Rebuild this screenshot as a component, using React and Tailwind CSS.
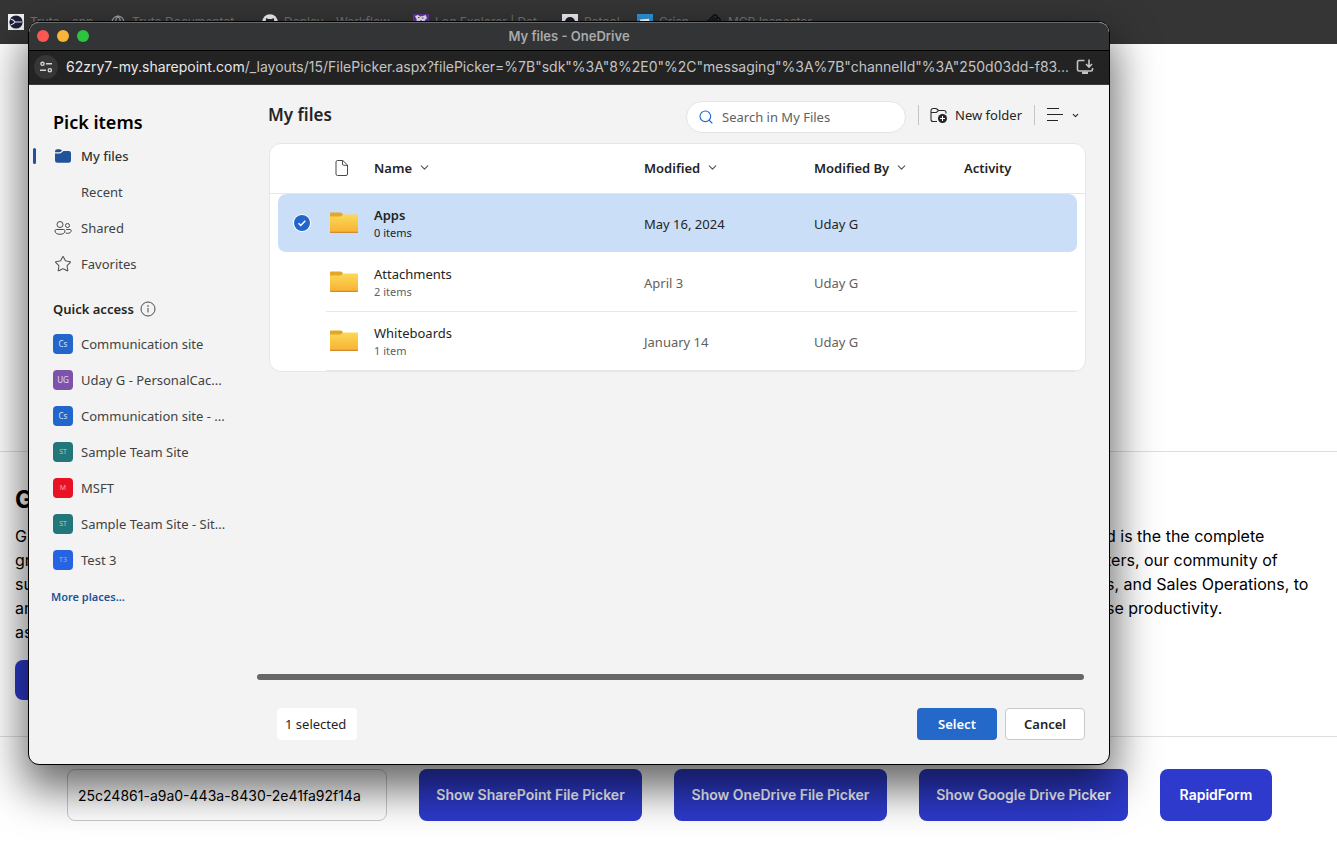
import React from 'react';
import { ChevronDown, Globe, Search, Star } from 'lucide-react';

const TrutoIcon = () => (
  <svg width="16" height="16" viewBox="0 0 16 16" className="shrink-0">
    <rect width="16" height="16" fill="#f4f4f8" />
    <circle cx="8" cy="8" r="6.6" fill="#1c2138" />
    <path d="M2.500 5C5 5.400 6.200 6.600 7.200 8c-1 1.400-2.200 2.600-4.700 3M7.200 8h6.600" fill="none" stroke="#f4f4f8" strokeWidth="1.100" />
  </svg>
);

const GithubIcon = () => (
  <svg width="16" height="16" viewBox="0 0 16 16" className="shrink-0">
    <circle cx="8" cy="8" r="7.800" fill="#f2f2f2" />
    <path d="M4.200 4l2 1h3.600l2-1 .4 2.600c.6 3.400-1.200 4.400-4.200 4.400s-4.800-1-4.200-4.400z" fill="#26282b" />
  </svg>
);

const DatadogIcon = () => (
  <svg width="16" height="16" viewBox="0 0 16 16" className="shrink-0">
    <rect width="16" height="16" fill="#5f3796" />
    <path d="M2 2l3-1 2 1.500 3-.5 2.500-1 1.500 3-2 2-1 4-4 2-3-3-.500-4z" fill="#efe8f7" />
    <path d="M5 3.500h1.500M9 4h1.500M8 6v2" stroke="#5f3796" strokeWidth="1.200" />
  </svg>
);

const RetoolIcon = () => (
  <svg width="16" height="16" viewBox="0 0 16 16" className="shrink-0">
    <rect width="16" height="16" fill="#f1eef3" />
    <path d="M3 8a5 5 0 0 1 10 0v5H3z" fill="#1d1d2b" />
  </svg>
);

const CrispIcon = () => (
  <svg width="16" height="16" viewBox="0 0 16 16" className="shrink-0">
    <rect width="16" height="16" fill="#2f94d8" />
    <path d="M3 5.500l9-.8.8 6-5 .4-2 2-.2-1.700-2 .2z" fill="#fff" />
  </svg>
);

const McpIcon = () => (
  <svg width="16" height="16" viewBox="0 0 16 16" className="shrink-0" fill="none" stroke="#0c0c0c" strokeWidth="1.300">
    <path d="M1.500 7.500l6-6a2 2 0 0 1 3 3l-4.500 4.500M6.500 8.500l4-4a2 2 0 0 1 3 3L8 13l1.500 1.500M9 3L4.500 7.500a2 2 0 0 0 3 3L12 6" />
  </svg>
);

const bookmarks = [
  { name: 'Truto - app', icon: <TrutoIcon />, width: 'w-[102px]' },
  { name: 'Truto Documentat..', icon: <Globe size={14} className="text-neutral-400 shrink-0 mx-px" />, width: 'w-[152px]' },
  { name: 'Deploy - Workflow', icon: <GithubIcon />, width: 'w-[151px]' },
  { name: 'Log Explorer | Dat..', icon: <DatadogIcon />, width: 'w-[149px]' },
  { name: 'Retool', icon: <RetoolIcon />, width: 'w-[75px]' },
  { name: 'Crisp', icon: <CrispIcon />, width: 'w-[69px]' },
  { name: 'MCP Inspector', icon: <McpIcon />, width: 'w-[120px]' },
];

const FolderSolid = () => (
  <svg width="20" height="20" viewBox="0 0 20 20" fill="#21539b">
    <path d="M2 5.500A2.300 2.300 0 0 1 4.300 3.200h2.400c.5 0 1 .2 1.400.5l1 .9-1.700 1.500c-.2.200-.4.200-.7.200H2z" />
    <path d="M2 7.500h4.800c.5 0 .9-.2 1.300-.5l2.300-2h5.300A2.300 2.300 0 0 1 18 7.300v7.200a2.300 2.300 0 0 1-2.300 2.300H4.300A2.300 2.300 0 0 1 2 14.500z" />
  </svg>
);

const People = () => (
  <svg width="20" height="20" viewBox="0 0 20 20" fill="none" stroke="#4a4a4a" strokeWidth="1">
    <circle cx="7" cy="6.500" r="3" />
    <circle cx="14.500" cy="7.500" r="2" />
    <path d="M3.300 11.500h7.400c.7 0 1.300.600 1.300 1.300 0 2.200-1.900 3.500-5 3.500s-5-1.300-5-3.500c0-.7.600-1.300 1.300-1.300z" />
    <path d="M13.200 11.500h3.900c.6 0 1.100.500 1.100 1.100 0 1.700-1.500 2.700-3.700 2.700-.7 0-1.300-.1-1.800-.3" />
  </svg>
);

const InfoIcon = () => (
  <svg width="16" height="16" viewBox="0 0 16 16" fill="none" stroke="#4a4a4a">
    <circle cx="8" cy="8" r="7" />
    <path d="M8 7v4.500" />
    <circle cx="8" cy="5" r=".4" />
  </svg>
);

const FileIcon = () => (
  <svg width="16" height="18" viewBox="0 0 16 18" fill="none" stroke="#4a4a4a" strokeWidth="1">
    <path d="M3.500 1.500h5.300L13.500 6v9A1.500 1.500 0 0 1 12 16.500H3.500A1.500 1.500 0 0 1 2 15V3a1.500 1.500 0 0 1 1.500-1.500z" />
    <path d="M8.500 1.500V5A1.300 1.300 0 0 0 9.800 6.300h3.700" />
  </svg>
);

const FolderIcon = () => (
  <svg width="28" height="22" viewBox="0 0 28 22" className="block">
    <defs>
      <linearGradient id="folder" x1="0" y1="0" x2="0" y2="1">
        <stop offset="0" stopColor="#fbd957" />
        <stop offset="1" stopColor="#f8b033" />
      </linearGradient>
    </defs>
    <path d="M0 1.500C0 1 .5.500 1 .500h9.500c.8 0 1.300.3 1.700.8L13 3v3H0z" fill="#e3a727" />
    <path d="M0 4.500h9.500c1 0 1.500-.2 2.200-.8l1.600-1.200H27c.6 0 1 .4 1 1V20c0 .6-.4 1-1 1H1c-.6 0-1-.4-1-1z" fill="url(#folder)" />
    <path d="M0 19.800V20c0 .6.400 1 1 1h26c.6 0 1-.4 1-1v-.2z" fill="#d08a30" />
  </svg>
);

const NewFolderIcon = () => (
  <svg width="20" height="20" viewBox="0 0 20 20" fill="none" stroke="#2b2b2b" strokeWidth="1.100">
    <path d="M8 16.500H4A2 2 0 0 1 2 14.500v-9a2 2 0 0 1 2-2h2.600c.5 0 .9.200 1.300.5L9.500 5.500H15a2 2 0 0 1 2 2v1" />
    <path d="M2 7.500h4.500c.5 0 .9-.1 1.200-.4L9.500 5.500" />
    <circle cx="13.500" cy="13.500" r="4.500" fill="#242424" stroke="none" />
    <path d="M13.500 11v5M11 13.500h5" stroke="#fff" />
  </svg>
);

const InstallIcon = () => (
  <svg width="18" height="16" viewBox="0 0 18 16" fill="none" stroke="#c4c4c4" strokeWidth="1.600">
    <path d="M8.500 1.500H3A1.500 1.500 0 0 0 1.500 3v7.500A1.500 1.500 0 0 0 3 12h12a1.500 1.500 0 0 0 1.500-1.500V9" />
    <path d="M13 .5v7M10 5l3 3 3-3" />
    <path d="M6 13.800h6" strokeWidth="2.400" />
  </svg>
);

const TuneIcon = () => (
  <svg width="14" height="14" viewBox="0 0 14 14" fill="none" stroke="#d5d5d5" strokeWidth="1.400">
    <circle cx="3.500" cy="3.800" r="1.600" />
    <path d="M7 3.800h6M1 10.200h6" />
    <circle cx="10.800" cy="10.200" r="1.600" />
  </svg>
);

const places = [
  { name: 'My files', icon: <FolderSolid />, active: true },
  { name: 'Recent', icon: null },
  { name: 'Shared', icon: <People /> },
  { name: 'Favorites', icon: <Star size={18} strokeWidth={1.4} className="text-neutral-600" /> },
];

const sites = [
  { name: 'Communication site', initials: 'Cs', color: 'bg-[#2266cb]', text: 'text-[8px] text-white/80' },
  { name: 'Uday G - PersonalCac...', initials: 'UG', color: 'bg-[#7d52ab]', text: 'text-[8px] text-white/80' },
  { name: 'Communication site - ...', initials: 'Cs', color: 'bg-[#2266cb]', text: 'text-[8px] text-white/80' },
  { name: 'Sample Team Site', initials: 'ST', color: 'bg-[#23767a]', text: 'text-[7px] text-white/60' },
  { name: 'MSFT', initials: 'M', color: 'bg-[#e81224]', text: 'text-[7px] text-white/60' },
  { name: 'Sample Team Site - Sit...', initials: 'ST', color: 'bg-[#23767a]', text: 'text-[7px] text-white/60' },
  { name: 'Test 3', initials: 'T3', color: 'bg-[#2663e3]', text: 'text-[7px] text-white/50' },
];

const files = [
  { name: 'Apps', count: '0 items', modified: 'May 16, 2024', by: 'Uday G', selected: true },
  { name: 'Attachments', count: '2 items', modified: 'April 3', by: 'Uday G' },
  { name: 'Whiteboards', count: '1 item', modified: 'January 14', by: 'Uday G' },
];

const pickers = [
  { name: 'Show SharePoint File Picker', width: 'w-[223px]' },
  { name: 'Show OneDrive File Picker', width: 'w-[213px]' },
  { name: 'Show Google Drive Picker', width: 'w-[209px]' },
  { name: 'RapidForm', width: 'w-[112px]' },
];

const SortHeader = ({ label }) => (
  <button className="flex items-center gap-[6px] font-semibold">
    {label}
    <ChevronDown size={13} strokeWidth={2} className="text-neutral-600" />
  </button>
);

const BookmarksBar = () => (
  <header className="h-11 bg-[#353535] flex items-center px-2 overflow-hidden">
    {bookmarks.map((item) => (
      <a key={item.name} href="#" className={`flex items-center gap-[6px] shrink-0 text-xs text-neutral-500 whitespace-nowrap ${item.width}`}>
        {item.icon}
        {item.name}
      </a>
    ))}
  </header>
);

const Sidebar = () => (
  <nav className="w-[228px] shrink-0 pt-[23px] text-[#424242]">
    <h1 className="pl-6 text-lg leading-7 font-semibold text-black">Pick items</h1>
    <ul className="mt-[2px]">
      {places.map((place) => (
        <li key={place.name}>
          <a href="#" className="h-9 flex items-center pl-1">
            <span className={`w-[3px] h-4 rounded-sm mr-[17px] ${place.active ? 'bg-[#21539b]' : ''}`} />
            <span className="w-5 h-5 flex items-center justify-center mr-2">{place.icon}</span>
            <span className={place.active ? 'font-medium text-[#333]' : ''}>{place.name}</span>
          </a>
        </li>
      ))}
    </ul>
    <h2 className="pl-6 mt-[14px] h-[26px] flex items-center gap-[6px] font-semibold text-[#242424]">
      Quick access
      <InfoIcon />
    </h2>
    <ul className="mt-1">
      {sites.map((site) => (
        <li key={site.name}>
          <a href="#" className="h-9 flex items-center gap-2 pl-6 whitespace-nowrap">
            <span className={`w-5 h-5 rounded flex items-center justify-center ${site.color} ${site.text}`}>{site.initials}</span>
            {site.name}
          </a>
        </li>
      ))}
    </ul>
    <a href="#" className="inline-block ml-[22px] mt-[11px] text-[11px] leading-4 font-semibold text-[#21539b]">More places...</a>
  </nav>
);

const FileTable = () => (
  <div className="ml-3 mr-[23px] rounded-xl border border-[#e6e6e6] bg-white overflow-hidden">
    <table className="w-full table-fixed border-separate border-spacing-0 text-left">
      <colgroup>
        <col className="w-2" />
        <col className="w-12" />
        <col className="w-12" />
        <col className="w-[270px]" />
        <col className="w-[170px]" />
        <col className="w-[150px]" />
        <col />
        <col className="w-2" />
      </colgroup>
      <thead>
        <tr className="h-[50px] text-[#242424] [&>th]:pb-[2px] [&>th]:border-b [&>th]:border-[#e6e6e6] [&>th]:font-semibold">
          <th />
          <th />
          <th className="pl-2"><FileIcon /></th>
          <th><SortHeader label="Name" /></th>
          <th><SortHeader label="Modified" /></th>
          <th><SortHeader label="Modified By" /></th>
          <th>Activity</th>
          <th />
        </tr>
      </thead>
      <tbody>
        {files.map((file) => {
          const selectedCell = 'border-b border-transparent bg-clip-padding bg-[#cadef8] text-[#242424]';
          const cell = file.selected ? selectedCell : 'border-b border-[#e8e8e8] text-[#616161]';
          return (
            <tr key={file.name} className="h-[59px]">
              <td />
              <td className={file.selected ? `${selectedCell} rounded-l-lg` : ''}>
                {file.selected && (
                  <label className="grid place-items-center w-4 h-4 ml-4">
                    <input
                      type="checkbox"
                      aria-label="Select Apps"
                      defaultChecked
                      className="appearance-none col-start-1 row-start-1 w-4 h-4 rounded-full bg-[#2266cb] ring-1 ring-white"
                    />
                    <svg width="10" height="10" viewBox="0 0 10 10" className="col-start-1 row-start-1 pointer-events-none" fill="none" stroke="#fff" strokeWidth="1.500">
                      <path d="M1.500 5.200l2.300 2.200 4.500-4.600" />
                    </svg>
                  </label>
                )}
              </td>
              <td className={`pl-1 ${cell}`}><FolderIcon /></td>
              <td className={cell}>
                <div className={`leading-5 text-[#242424] ${file.selected ? 'font-semibold' : ''}`}>{file.name}</div>
                <div className="text-[11px] leading-4">{file.count}</div>
              </td>
              <td className={`pt-[2px] ${cell}`}>{file.modified}</td>
              <td className={`pt-[2px] ${cell}`}>{file.by}</td>
              <td className={`${cell} ${file.selected ? 'rounded-r-lg' : ''}`} />
              <td />
            </tr>
          );
        })}
      </tbody>
    </table>
  </div>
);

const PickerWindow = () => (
  <div className="absolute top-[21px] left-7 right-[227px] flex flex-col rounded-[11px] border border-black bg-[#f3f3f3] overflow-hidden shadow-[0_20px_44px_4px_rgba(0,0,0,0.6)]">
    <div className="h-[29px] shrink-0 grid grid-cols-3 items-center pb-[2px] bg-[#333436] border-t border-b border-t-[#68696b] border-b-black rounded-t-[10px]">
      <div className="flex gap-2 pl-2">
        <span className="w-3 h-3 rounded-full bg-[#fd5754]" />
        <span className="w-3 h-3 rounded-full bg-[#f9b53a]" />
        <span className="w-3 h-3 rounded-full bg-[#2dc440]" />
      </div>
      <div className="text-center text-[13px] leading-4 font-semibold text-[#a9aaab]">My files - OneDrive</div>
    </div>
    <div className="h-[34px] shrink-0 flex items-center gap-2 pl-[5px] pr-[15px] pb-px bg-[#232323] border-b border-[#3c3c3c]">
      <button aria-label="Site information" className="w-6 h-6 shrink-0 rounded-full bg-[#363636] flex items-center justify-center">
        <TuneIcon />
      </button>
      <div className="flex-1 whitespace-nowrap overflow-hidden text-sm text-[#c4c4c4]">
        <span className="text-[#e8e8e8]">62zry7-my.sharepoint.com</span>
        /_layouts/15/FilePicker.aspx?filePicker=%7B"sdk"%3A"8%2E0"%2C"messaging"%3A%7B"channelId"%3A"250d03dd-f83...
      </div>
      <button aria-label="Install app"><InstallIcon /></button>
    </div>

    <div className="h-[679px] flex font-['Noto_Sans',sans-serif] text-[13px] leading-5">
      <Sidebar />
      <main className="flex-1 min-w-0 flex flex-col">
        <div className="h-[58px] shrink-0 flex items-center pl-[11px] pr-[29px] pt-[2px] text-[#242424]">
          <h2 className="flex-1 text-[17px] leading-6 font-semibold">My files</h2>
          <label className="w-[220px] h-8 mt-[3px] flex items-center gap-2 px-[11px] rounded-full border border-[#e4e4e4] bg-white">
            <Search size={16} strokeWidth={1.7} className="text-[#2266cb] shrink-0" />
            <input
              type="text"
              aria-label="Search"
              placeholder="Search in My Files"
              className="w-full bg-transparent outline-none placeholder:text-[#616161]"
            />
          </label>
          <div className="flex items-center gap-3 ml-3">
            <span className="w-px h-5 bg-[#c4c4c4]" />
            <button className="flex items-center gap-[6px] -ml-[2px]">
              <NewFolderIcon />
              New folder
            </button>
            <span className="w-px h-5 bg-[#c4c4c4]" />
            <button aria-label="View options" className="flex items-center gap-2">
              <svg width="16" height="14" viewBox="0 0 16 14" stroke="#242424" strokeWidth="1">
                <path d="M0 .5h12M0 6.500h16M0 12.500h11" />
              </svg>
              <ChevronDown size={9} strokeWidth={3} />
            </button>
          </div>
        </div>
        <FileTable />
        <div className="mt-auto mr-[25px] h-[6px] shrink-0 rounded-full bg-[#666]" />
        <div className="mt-7 mb-6 ml-5 mr-6 shrink-0 flex items-center gap-2 text-[#242424]">
          <div className="w-20 h-8 rounded bg-white flex items-center pl-2 mr-auto">1 selected</div>
          <button className="w-20 h-8 rounded bg-[#2468c9] text-white font-semibold">Select</button>
          <button className="w-20 h-8 rounded border border-[#c9c9c9] bg-white font-semibold">Cancel</button>
        </div>
      </main>
    </div>
  </div>
);

const App = () => {
  return (
    <div className="relative min-h-screen flex flex-col bg-white text-black font-['Inter',sans-serif] overflow-hidden">
      <BookmarksBar />
      <div className="h-[407px] shrink-0" />
      <section className="shrink-0 flex justify-between items-start border-t border-b border-[#dedede] pt-8 pb-9 pl-[15px] pr-8 leading-6">
        <div>
          <h2 className="text-2xl leading-8 font-bold">G</h2>
          <p className="mt-2">G<br />gr<br />su<br />ar<br />as</p>
          <button aria-label="Open" className="block mt-4 w-20 h-10 rounded-lg bg-[#2d3acb]" />
        </div>
        <p className="mt-10 w-[199px] whitespace-nowrap">
          d is the the complete<br />
          ters, our community of<br />
          s, and Sales Operations, to<br />
          se productivity.
        </p>
      </section>
      <section className="flex-1 flex justify-center items-start gap-8 pt-8 pb-11 pl-[2px] text-sm">
        <input
          type="text"
          aria-label="Account id"
          defaultValue="25c24861-a9a0-443a-8430-2e41fa92f14a"
          className="w-80 h-[52px] px-[10px] rounded-lg border border-[#c8c9ce] bg-white"
        />
        {pickers.map((picker) => (
          <button key={picker.name} className={`h-[52px] rounded-lg bg-[#2d3acb] text-white font-semibold whitespace-nowrap ${picker.width}`}>
            {picker.name}
          </button>
        ))}
      </section>
      <PickerWindow />
    </div>
  );
};

export default App;
